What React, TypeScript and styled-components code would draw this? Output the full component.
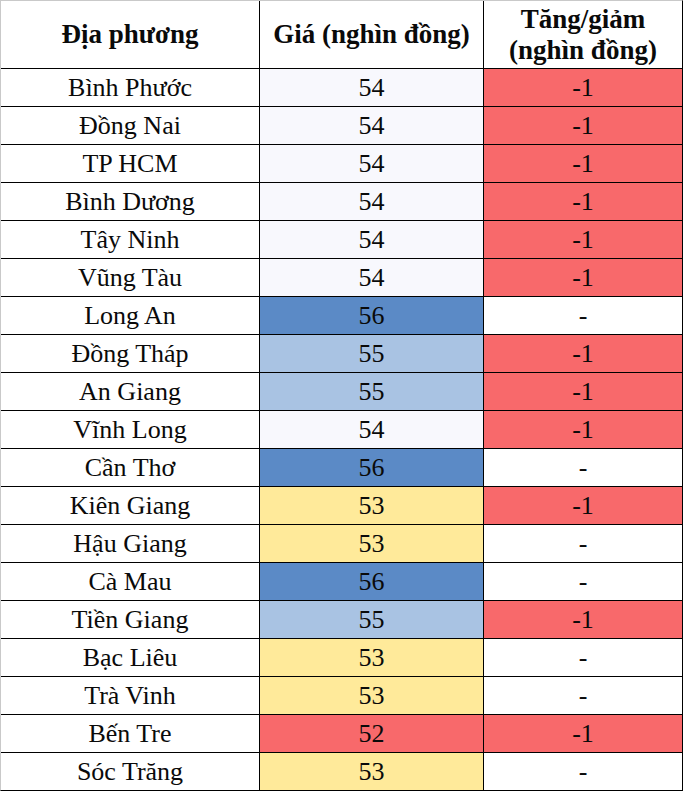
import React, { ReactElement } from "react";
import styled, { createGlobalStyle } from "styled-components";

type Tone = "plain" | "faint" | "red" | "blue" | "lightBlue" | "yellow";

interface Row {
  place: string;
  price: number;
  tone: Tone;
  change: string;
}

const rows: Row[] = [
  { place: "Bình Phước", price: 54, tone: "faint", change: "-1" },
  { place: "Đồng Nai", price: 54, tone: "faint", change: "-1" },
  { place: "TP HCM", price: 54, tone: "faint", change: "-1" },
  { place: "Bình Dương", price: 54, tone: "faint", change: "-1" },
  { place: "Tây Ninh", price: 54, tone: "faint", change: "-1" },
  { place: "Vũng Tàu", price: 54, tone: "faint", change: "-1" },
  { place: "Long An", price: 56, tone: "blue", change: "-" },
  { place: "Đồng Tháp", price: 55, tone: "lightBlue", change: "-1" },
  { place: "An Giang", price: 55, tone: "lightBlue", change: "-1" },
  { place: "Vĩnh Long", price: 54, tone: "faint", change: "-1" },
  { place: "Cần Thơ", price: 56, tone: "blue", change: "-" },
  { place: "Kiên Giang", price: 53, tone: "yellow", change: "-1" },
  { place: "Hậu Giang", price: 53, tone: "yellow", change: "-" },
  { place: "Cà Mau", price: 56, tone: "blue", change: "-" },
  { place: "Tiền Giang", price: 55, tone: "lightBlue", change: "-1" },
  { place: "Bạc Liêu", price: 53, tone: "yellow", change: "-" },
  { place: "Trà Vinh", price: 53, tone: "yellow", change: "-" },
  { place: "Bến Tre", price: 52, tone: "red", change: "-1" },
  { place: "Sóc Trăng", price: 53, tone: "yellow", change: "-" },
];

const tones: Record<Tone, string> = {
  plain: "#ffffff",
  faint: "#f8f8fd",
  red: "#f8696b",
  blue: "#5b8ac6",
  lightBlue: "#a9c3e3",
  yellow: "#ffea9a",
};

const GlobalStyle = createGlobalStyle`
  html, body {
    margin: 0;
    background: #ffffff;
    font-family: 'Liberation Serif', serif;
  }
`;

export default function App(): ReactElement {
  return (
    <>
      <GlobalStyle />
      <Sheet>
        <HeadCell>Địa phương</HeadCell>
        <HeadCell>Giá (nghìn đồng)</HeadCell>
        <HeadCell>
          Tăng/giảm
          <br />
          (nghìn đồng)
        </HeadCell>
        {rows.map((r) => (
          <React.Fragment key={r.place}>
            <Cell tone="plain">{r.place}</Cell>
            <Cell tone={r.tone}>{r.price}</Cell>
            <Cell tone={r.change === "-1" ? "red" : "plain"}>{r.change}</Cell>
          </React.Fragment>
        ))}
      </Sheet>
    </>
  );
}

const Sheet = styled.div`
  display: grid;
  grid-template-columns: 258px 223px 198px;
  grid-template-rows: 67px repeat(19, 37px);
  gap: 1px;
  width: max-content;
  background: #000000;
  border-left: 1px solid #c9c9c9;
  border-top: 1px solid #c9c9c9;
  border-right: 1px solid #000000;
  border-bottom: 1px solid #000000;
  color: #0a0a0a;
  font-family: 'Liberation Serif', serif;
`;

const HeadCell = styled.div`
  display: flex;
  align-items: center;
  justify-content: center;
  text-align: center;
  background: #ffffff;
  font-size: 27px;
  font-weight: 700;
  line-height: 31px;
`;

const Cell = styled.div<{ tone: Tone }>`
  display: flex;
  align-items: center;
  justify-content: center;
  background: ${(p) => tones[p.tone]};
  font-size: 26px;
  line-height: 1;
`;
